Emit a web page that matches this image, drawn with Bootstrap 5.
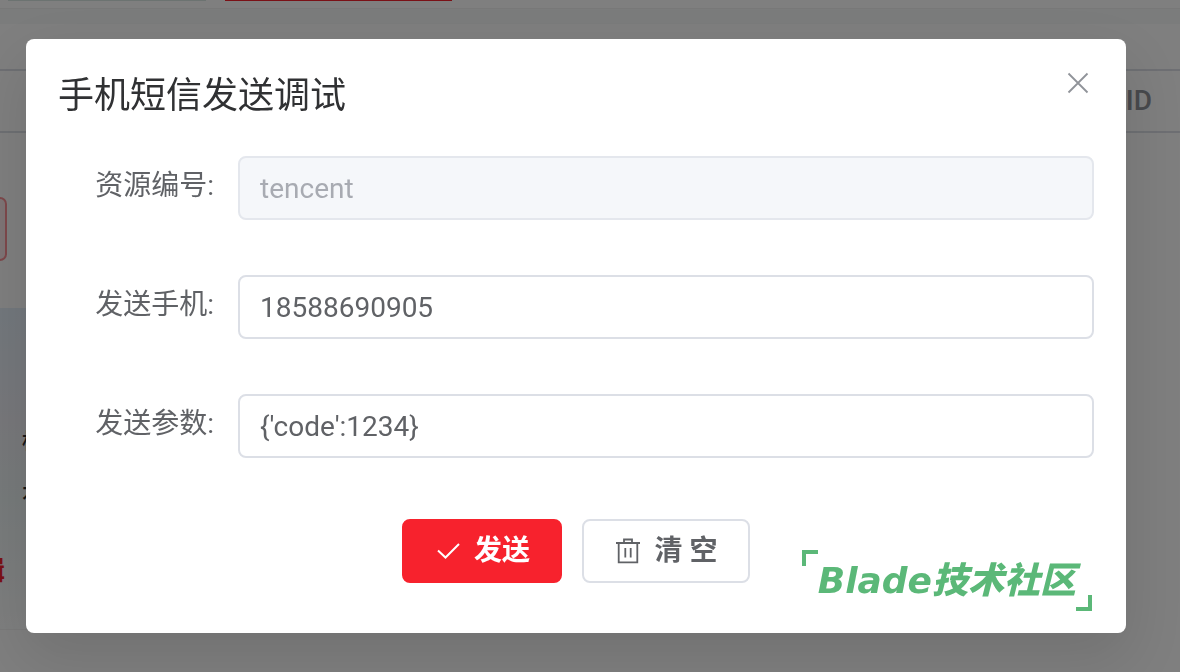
<!DOCTYPE html>
<html lang="zh-CN">
<head>
<meta charset="utf-8">
<meta name="viewport" content="width=device-width, initial-scale=1">
<title>手机短信发送调试</title>
<link href="https://cdn.jsdelivr.net/npm/bootstrap@5.3.0/dist/css/bootstrap.min.css" rel="stylesheet">
<style>
  body { font-family: Roboto, "Noto Sans CJK SC", sans-serif; font-size: 28px; color: #606266; background: #fff; overflow: hidden; }

  /* page behind the dialog */
  .tab-strip { height: 8px; padding-left: 8px; gap: 19px; background: #fff; }
  .tab-item { width: 198px; height: 1px; background: #d8e6e2; }
  .tab-item.current { width: 227px; background: #f5222d; }
  .strip-gap { height: 16px; background: #f6f9f8; border-top: 1px solid #f0f0f0; }
  .filter-row { margin-top: 45px; height: 64px; padding-right: 28px; border-top: 2px solid #dcdfe6; border-bottom: 2px solid #dcdfe6; color: #909399; font-weight: 500; }
  .tool-btn { width: 7px; height: 64px; margin-top: 64px; padding: 0; background: #fde9ea; border: 2px solid #fa9096; border-left: 0; border-radius: 0 8px 8px 0; }
  .side-panel { margin-top: 47px; height: 322px; padding-top: 108px; background: linear-gradient(#e6f1fa, #f0f1f7 35%, #eff6f7 60%, #fdfefe); border-bottom: 1px solid #f5f5f5; }
  .side-line { font-size: 22px; line-height: 52px; font-weight: 500; padding-left: 22px; color: #303133; }
  .side-edit { width: 5px; overflow: hidden; font-size: 26px; line-height: 50px; color: #f5222d; margin-top: 26px; font-weight: 700; }

  /* dialog */
  .modal { background: rgba(0, 0, 0, .5); overflow: hidden; }
  .modal-dialog { max-width: none; margin: 39px 54px 0 26px; }
  .modal-content { border: 0; border-radius: 8px; box-shadow: 0 24px 64px 8px rgba(0, 0, 0, .1), 0 16px 40px rgba(0, 0, 0, .02); }
  .modal-header { border: 0; padding: 32px 32px 0; }
  .modal-title { font-size: 36px; line-height: 50px; font-weight: 400; color: #303133; }
  .close-btn { width: 32px; height: 24px; }
  .modal-body { padding: 35px 32px 50px; }
  .form-rows { gap: 55px; }
  .field-label { width: 180px; padding-right: 24px; line-height: 60px; text-align: right; }
  .form-control { height: 64px; padding: 0 20px; font-size: 28px; border: 2px solid #dcdfe6; border-radius: 8px; color: #606266; }
  .form-control:disabled { background: #f5f7fa; border-color: #e4e7ed; color: #a8abb2; }
  .actions { margin-top: 61px; gap: 20px; }
  .action-btn { height: 64px; font-size: 28px; font-weight: 700; border: 2px solid #dcdfe6; border-radius: 8px; gap: 12px; color: #606266; background: #fff; padding: 0; }
  .action-send { width: 160px; background: #f7222d; border-color: #f7222d; color: #fff; }
  .action-clear { width: 168px; }

  .watermark { right: 34px; bottom: 22px; padding: 12px 16px 11px; color: #5bb878; }
  .watermark-text { font: italic 900 36px/38px "DejaVu Sans", "Noto Sans CJK SC", sans-serif; }
  .corner { width: 16px; height: 16px; border: 0 solid #5bb878; }
  .corner-start { border-width: 4px 0 0 4px; }
  .corner-end { border-width: 0 4px 4px 0; }
</style>
</head>
<body>
<div aria-hidden="true">
  <div class="tab-strip d-flex"><span class="tab-item"></span><span class="tab-item current"></span></div>
  <div class="strip-gap"></div>
  <div class="filter-row d-flex align-items-center justify-content-end">ID</div>
  <div class="tool-btn"></div>
  <div class="side-panel w-50">
    <div class="side-line">标</div>
    <div class="side-line">本</div>
    <div class="side-edit d-flex justify-content-end">辑</div>
  </div>
</div>

<div class="modal d-block" role="dialog" aria-modal="true" aria-labelledby="dialogTitle">
  <div class="modal-dialog">
    <form class="modal-content">
      <div class="modal-header align-items-start">
        <h1 class="modal-title" id="dialogTitle">手机短信发送调试</h1>
        <button type="button" class="close-btn btn p-0 border-0 d-flex justify-content-center" aria-label="关闭">
          <svg width="24" height="24" viewBox="0 0 24 24" fill="none" stroke="#909399" stroke-width="1.8"><path d="M2.500 2.500l19 19M21.500 2.500l-19 19"/></svg>
        </button>
      </div>
      <div class="modal-body">
        <div class="form-rows d-flex flex-column">
          <div class="d-flex">
            <label class="field-label flex-shrink-0" for="code">资源编号:</label>
            <input class="form-control" id="code" type="text" value="tencent" disabled>
          </div>
          <div class="d-flex">
            <label class="field-label flex-shrink-0" for="phone">发送手机:</label>
            <input class="form-control" id="phone" type="text" value="18588690905">
          </div>
          <div class="d-flex">
            <label class="field-label flex-shrink-0" for="params">发送参数:</label>
            <input class="form-control" id="params" type="text" value="{'code':1234}">
          </div>
        </div>
        <div class="actions d-flex justify-content-center">
          <button type="button" class="action-btn action-send btn d-flex align-items-center justify-content-center">
            <svg width="28" height="28" viewBox="0 0 28 28" fill="none" stroke="#fff" stroke-width="2"><path d="M4 13.500l7.500 7L25 7"/></svg>
            <span>发送</span>
          </button>
          <button type="button" class="action-btn action-clear btn d-flex align-items-center justify-content-center">
            <svg width="28" height="28" viewBox="0 0 28 28" fill="none" stroke="#606266" stroke-width="1.800"><path d="M1 6h24M3.700 6v19.300h18.600V6M9 6V2.500h8V6M10.300 11v9.500M15.700 11v9.500"/></svg>
            <span>清 空</span>
          </button>
        </div>
      </div>
      <div class="watermark position-absolute">
        <span class="corner corner-start position-absolute top-0 start-0"></span>
        <div class="watermark-text text-nowrap">Blade技术社区</div>
        <span class="corner corner-end position-absolute bottom-0 end-0"></span>
      </div>
    </form>
  </div>
</div>
<script src="https://cdn.jsdelivr.net/npm/bootstrap@5.3.0/dist/js/bootstrap.bundle.min.js"></script>
</body>
</html>
